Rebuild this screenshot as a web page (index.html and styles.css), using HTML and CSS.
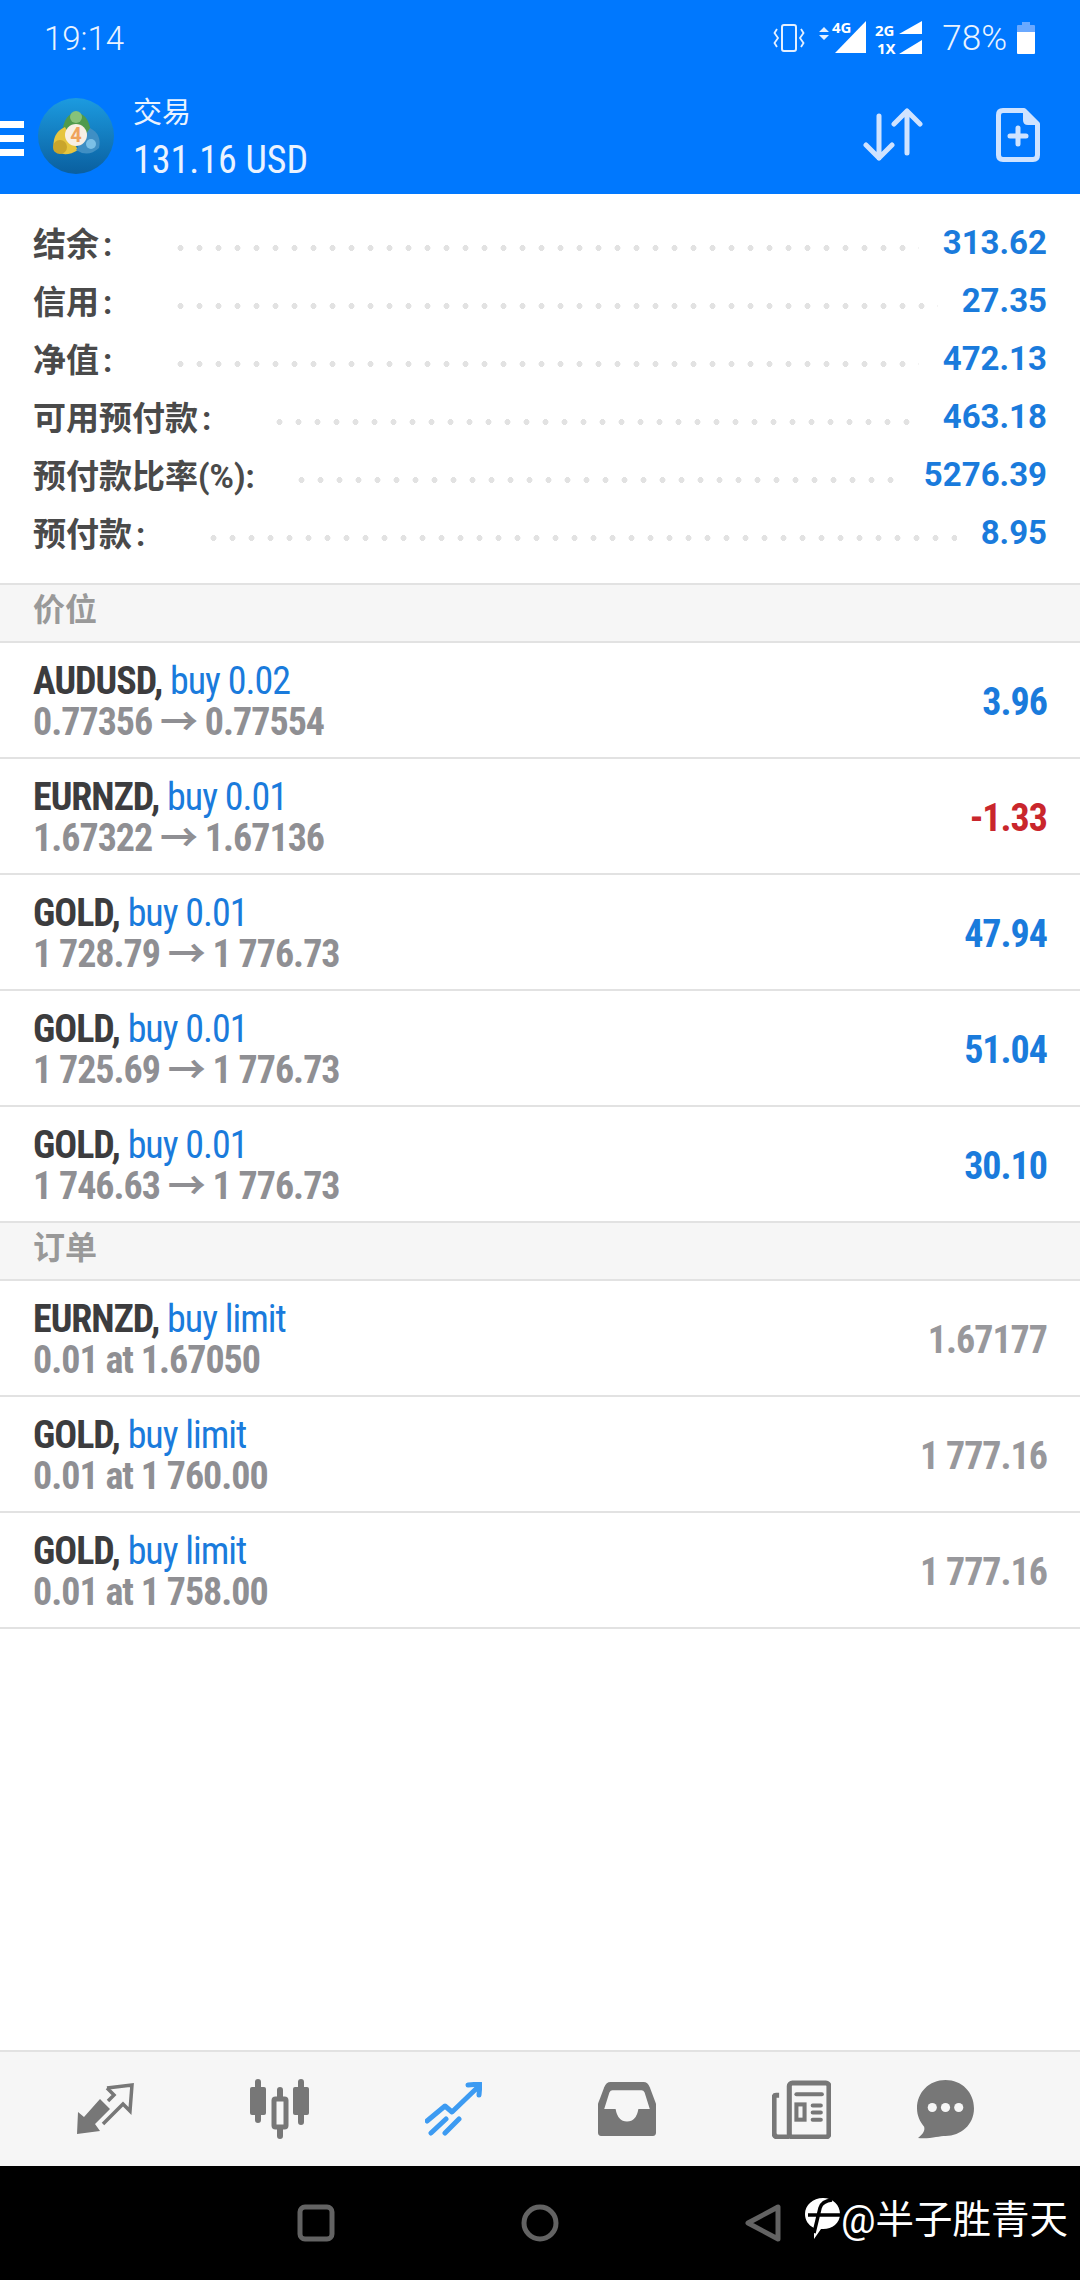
FILE: index.html
```html
<!DOCTYPE html>
<html lang="zh-CN">
<head>
    <meta charset="UTF-8">
    <meta name="viewport" content="width=device-width, initial-scale=1.0">
    <title>交易</title>
    <link rel="stylesheet" href="styles.css">
</head>
<body>
    <div class="phone">
        <header class="top">
            <div class="status-bar">
                <span class="clock">19:14</span>
                <div class="status-icons">
                    <svg class="icon-vibrate" width="32" height="30" viewBox="0 0 32 30" fill="none" stroke="#e4f0ff" stroke-width="2"><rect x="9" y="2" width="14" height="26" rx="2"/><path d="M4 6 L1.500 10 L5 15 L1.500 20 L4 24 M28 6 L30.500 10 L27 15 L30.500 20 L28 24" stroke-width="1.800"/></svg>
                    <svg class="net" width="48" height="34" viewBox="0 0 48 34"><path d="M1 11 L6 6 L11 11 Z M1 14 L11 14 L6 19 Z" fill="#e4f0ff"/><path d="M48 0 V32 H17 Z" fill="#fff"/><text x="14" y="12" class="net-label">4G</text></svg>
                    <svg class="net" width="48" height="34" viewBox="0 0 48 34"><path d="M47 0 V13 H24 Z M47 19 V33 H24 Z" fill="#fff"/><text x="0" y="15" class="net-label">2G</text><text x="2" y="33" class="net-label">1X</text></svg>
                    <span class="battery-text">78%</span>
                    <svg width="18" height="32" viewBox="0 0 18 32"><path d="M5 0 H13 V3 H17 Q18 3 18 4 V10 H0 V4 Q0 3 1 3 H5 Z" fill="#6aa9ff"/><path d="M0 10 H18 V31 Q18 32 17 32 H1 Q0 32 0 31 Z" fill="#fff"/></svg>
                </div>
            </div>
            <div class="toolbar">
                <div class="burger"><span></span><span></span><span></span></div>
                <svg class="logo" width="76" height="76" viewBox="0 0 76 76">
                    <defs>
                        <linearGradient id="logoBg" x1="0" y1="0" x2="0" y2="1"><stop offset="0" stop-color="#1c9be0"/><stop offset="1" stop-color="#0a5f9f"/></linearGradient>
                    </defs>
                    <circle cx="38" cy="38" r="38" fill="url(#logoBg)"/>
                    <path d="M24 36 Q26 15 38 15 Q51 15 53 36 L38 44 Z" fill="#4f9a4c"/>
                    <circle cx="38" cy="19" r="6" fill="#86c27a"/>
                    <path d="M16 53 Q13 35 27 29 L40 52 Q28 60 16 53 Z" fill="#e6c53f"/>
                    <circle cx="22" cy="49" r="7" fill="#c9a52c"/>
                    <path d="M61 50 Q64 36 52 30 L38 52 Q50 60 61 50 Z" fill="#3f8fc4"/>
                    <circle cx="53" cy="46" r="5" fill="#7cc0e6"/>
                    <circle cx="38" cy="37" r="11" fill="#f8efe4"/>
                    <text x="38" y="44" class="logo-num">4</text>
                </svg>
                <div class="account">
                    <span class="account-title">交易</span>
                    <span class="account-value">131.16 USD</span>
                </div>
                <svg class="action-sort" width="60" height="54" viewBox="0 0 60 54" fill="none" stroke="#cfe3ff" stroke-width="5" stroke-linecap="round" stroke-linejoin="round"><path d="M16 8 V50 M3 37 L16 50 L29 37"/><path d="M44 45 V3 M31 16 L44 3 L57 16"/></svg>
                <svg class="action-new" width="44" height="54" viewBox="0 0 44 54" fill="none"><path d="M7 2.500 H28 L41.500 16 V47 Q41.500 51.500 37 51.500 H7 Q2.500 51.500 2.500 47 V7 Q2.500 2.500 7 2.500 Z" stroke="#cfe3ff" stroke-width="5" stroke-linejoin="round"/><path d="M27 1 L43 17 H32 Q27 17 27 12 Z" fill="#cfe3ff"/><path d="M22 20 V36 M14 28 H30" stroke="#cfe3ff" stroke-width="5" stroke-linecap="round"/></svg>
            </div>
        </header>

        <section class="summary">
            <div class="summary-row"><span class="summary-label">结余<span class="colon">:</span></span><span class="dots"></span><span class="summary-value">313.62</span></div>
            <div class="summary-row"><span class="summary-label">信用<span class="colon">:</span></span><span class="dots"></span><span class="summary-value">27.35</span></div>
            <div class="summary-row"><span class="summary-label">净值<span class="colon">:</span></span><span class="dots"></span><span class="summary-value">472.13</span></div>
            <div class="summary-row"><span class="summary-label">可用预付款<span class="colon">:</span></span><span class="dots"></span><span class="summary-value">463.18</span></div>
            <div class="summary-row"><span class="summary-label">预付款比率(%):</span><span class="dots dots-tight"></span><span class="summary-value">5276.39</span></div>
            <div class="summary-row"><span class="summary-label">预付款<span class="colon">:</span></span><span class="dots"></span><span class="summary-value">8.95</span></div>
        </section>

        <div class="section-head">价位</div>
        <div class="trade">
            <div class="trade-info"><div class="line-one"><b>AUDUSD,</b> <span class="side">buy 0.02</span></div><div class="line-two">0.77356 → 0.77554</div></div>
            <span class="profit">3.96</span>
        </div>
        <div class="trade">
            <div class="trade-info"><div class="line-one"><b>EURNZD,</b> <span class="side">buy 0.01</span></div><div class="line-two">1.67322 → 1.67136</div></div>
            <span class="profit loss">-1.33</span>
        </div>
        <div class="trade">
            <div class="trade-info"><div class="line-one"><b>GOLD,</b> <span class="side">buy 0.01</span></div><div class="line-two">1 728.79 → 1 776.73</div></div>
            <span class="profit">47.94</span>
        </div>
        <div class="trade">
            <div class="trade-info"><div class="line-one"><b>GOLD,</b> <span class="side">buy 0.01</span></div><div class="line-two">1 725.69 → 1 776.73</div></div>
            <span class="profit">51.04</span>
        </div>
        <div class="trade">
            <div class="trade-info"><div class="line-one"><b>GOLD,</b> <span class="side">buy 0.01</span></div><div class="line-two">1 746.63 → 1 776.73</div></div>
            <span class="profit">30.10</span>
        </div>

        <div class="section-head">订单</div>
        <div class="trade">
            <div class="trade-info"><div class="line-one"><b>EURNZD,</b> <span class="side">buy limit</span></div><div class="line-two">0.01 at 1.67050</div></div>
            <span class="profit pending">1.67177</span>
        </div>
        <div class="trade">
            <div class="trade-info"><div class="line-one"><b>GOLD,</b> <span class="side">buy limit</span></div><div class="line-two">0.01 at 1 760.00</div></div>
            <span class="profit pending">1 777.16</span>
        </div>
        <div class="trade">
            <div class="trade-info"><div class="line-one"><b>GOLD,</b> <span class="side">buy limit</span></div><div class="line-two">0.01 at 1 758.00</div></div>
            <span class="profit pending">1 777.16</span>
        </div>

        <div class="spacer"></div>

        <nav class="tabs">
            <svg width="57" height="52" viewBox="0 0 57 52"><path d="M0 51 L1 29 L7 34 L23 16 L33 26 L18 41 L23 48 Z" fill="#777"/><path d="M30 5 L55 2 L53 28 L46 21 L26 41 M30 5 L37 12 L31 18" fill="none" stroke="#777" stroke-width="3.500"/></svg>
            <svg width="59" height="60" viewBox="0 0 59 60"><path d="M8 3 V41 M51 3 V43 M30 11 V57" stroke="#777" stroke-width="6" stroke-linecap="round"/><rect x="0" y="8" width="16" height="28" rx="2" fill="#777"/><rect x="43" y="8" width="16" height="28" rx="2" fill="#777"/><rect x="24" y="20" width="12" height="28" rx="1.500" fill="#f6f6f6" stroke="#777" stroke-width="5"/></svg>
            <svg width="57" height="54" viewBox="0 0 57 54" fill="none" stroke="#3d9bf2" stroke-width="5" stroke-linecap="round" stroke-linejoin="round"><path d="M2 39 L20 24 L27 30 L53 5 M43 3 L55 2 L54 13"/><path d="M6 51 L21 37 M20 51 L34 37"/></svg>
            <svg width="58" height="54" viewBox="0 0 56 52"><path d="M12 0 H44 Q48 0 50 5 L56 21 V49 Q56 52 53 52 H3 Q0 52 0 49 V21 L6 5 Q8 0 12 0 Z" fill="#777"/><path d="M14 8 H42 Q44 8 45 10 L50 26 H39 Q37 38 28 38 Q19 38 17 26 H6 L11 10 Q12 8 14 8 Z" fill="#f6f6f6"/></svg>
            <svg width="59" height="59" viewBox="0 0 58 58" fill="none" stroke="#777"><rect x="17" y="3" width="39" height="53" rx="3" stroke-width="5"/><path d="M7 15 H4 Q2 15 2 18 V52 Q2 56 6 56 H17" stroke-width="5"/><path d="M24 14 H49" stroke-width="4" stroke-linecap="round"/><rect x="24" y="24" width="8" height="15" stroke-width="4"/><path d="M40 25 H48 M40 32 H48 M40 39 H48" stroke-width="4" stroke-linecap="round"/></svg>
            <svg width="57" height="59" viewBox="0 0 56 58"><path d="M28 0 C44 0 56 12 56 28 C56 44 43 55 28 55 C22 55 13 58 1 57 C6 53 8 50 7 46 C3 41 0 35 0 28 C0 12 12 0 28 0 Z" fill="#777"/><circle cx="15" cy="27" r="4.500" fill="#f6f6f6"/><circle cx="28" cy="27" r="4.500" fill="#f6f6f6"/><circle cx="41" cy="27" r="4.500" fill="#f6f6f6"/></svg>
        </nav>

        <footer class="nav-bar">
            <svg class="nav-square" width="38" height="38" viewBox="0 0 38 38" fill="none" stroke="#636363" stroke-width="5"><rect x="3" y="3" width="32" height="32" rx="5"/></svg>
            <svg class="nav-circle" width="38" height="38" viewBox="0 0 38 38" fill="none" stroke="#636363" stroke-width="5"><circle cx="19" cy="19" r="16"/></svg>
            <svg class="nav-back" width="36" height="38" viewBox="0 0 36 38" fill="none" stroke="#636363" stroke-width="5" stroke-linejoin="round"><path d="M33 3 V35 L3 19 Z"/></svg>
            <div class="mark">
                <svg width="36" height="42" viewBox="0 0 36 42"><path d="M18 0 C28 0 35 7 35 16 C35 26 26 32 16 31 L9 41 L9 30 C3 27 0 22 0 16 C0 7 8 0 18 0 Z" fill="#fff"/><path d="M9 35 L15 10 Q17 3 27 2 M3 17 H36" fill="none" stroke="#000" stroke-width="3.500"/></svg>
                <span>@半子胜青天</span>
            </div>
        </footer>
    </div>
</body>
</html>
```

FILE: styles.css
```css
* {
    box-sizing: border-box;
}

body {
    margin: 0;
    font-family: Roboto, "Noto Sans CJK SC", sans-serif;
    background: #fff;
    color: #444;
}

.phone {
    width: 1080px;
    height: 2280px;
    display: flex;
    flex-direction: column;
    overflow: hidden;
}

.top {
    height: 194px;
    flex: none;
    background: #0078fe;
    color: #fff;
}

.status-bar {
    height: 76px;
    padding: 0 45px 0 44px;
    display: flex;
    justify-content: space-between;
    align-items: center;
}

.clock {
    font-size: 33px;
    font-weight: 300;
    color: #eaf3ff;
}

.status-icons {
    display: flex;
    align-items: center;
}

.icon-vibrate {
    margin-right: 13px;
}

.net {
    margin-right: 9px;
    overflow: visible;
}

.net-label {
    font-family: "Noto Sans", sans-serif;
    font-size: 15px;
    font-weight: 700;
    fill: #fff;
}

.battery-text {
    font-size: 35px;
    font-weight: 300;
    margin: 0 10px;
    color: #eaf3ff;
}

.toolbar {
    height: 118px;
    display: flex;
    align-items: center;
}

.burger {
    width: 24px;
    display: flex;
    flex-direction: column;
    gap: 7px;
    margin-top: 7px;
}

.burger span {
    height: 7px;
    background: #fff;
}

.logo {
    margin: 2px 0 0 14px;
    flex: none;
}

.logo-num {
    font-size: 20px;
    font-weight: 700;
    fill: #efa35c;
    text-anchor: middle;
}

.account {
    display: flex;
    flex-direction: column;
    margin-left: 19px;
    margin-top: 6px;
    flex: 1;
}

.account-title {
    font-size: 29px;
    line-height: 44px;
    color: #eaf3ff;
}

.account-value {
    font-size: 38px;
    line-height: 50px;
    font-stretch: 75%;
    color: #eaf3ff;
}

.action-sort {
    margin-right: 73px;
}

.action-new {
    margin-right: 40px;
}

.summary {
    height: 389px;
    flex: none;
    padding: 19px 33px 0;
}

.summary-row {
    height: 58px;
    display: flex;
    align-items: center;
}

.summary-label {
    font-size: 33px;
    font-weight: 700;
    color: #4a4a4a;
}

.colon {
    margin-left: 4px;
}

.dots {
    flex: 1;
    height: 6px;
    margin: 12px 24px 0 59px;
    background: radial-gradient(circle, #e2e2e2 2.800px, transparent 3.200px) 0 0 / 19px 6px repeat-x;
}

.dots-tight {
    margin-left: 37px;
}

.summary-value {
    font-size: 33px;
    font-weight: 700;
    color: #1a7bdc;
}

.section-head {
    height: 60px;
    flex: none;
    padding: 0 33px 12px;
    display: flex;
    align-items: center;
    background: #f6f6f6;
    border-top: 2px solid #e2e2e2;
    border-bottom: 2px solid #e2e2e2;
    font-size: 32px;
    font-weight: 700;
    color: #999;
}

.trade {
    height: 116px;
    flex: none;
    padding: 4px 33px 0;
    display: flex;
    align-items: center;
    justify-content: space-between;
    border-bottom: 2px solid #e2e2e2;
}

.trade + .section-head {
    border-top: 0;
    height: 58px;
}

.line-one,
.line-two {
    font-size: 38px;
    line-height: 41px;
    font-stretch: 75%;
    letter-spacing: -1px;
}

.line-one b {
    color: #3c3c3e;
}

.side {
    color: #1a7bdc;
}

.line-two {
    font-weight: 700;
    color: #8f8f93;
}

.profit {
    font-size: 38px;
    font-weight: 700;
    font-stretch: 75%;
    letter-spacing: -1px;
    color: #1a7bdc;
}

.loss {
    color: #c9262c;
}

.pending {
    color: #98989c;
}

.spacer {
    flex: 1;
}

.tabs {
    height: 116px;
    flex: none;
    background: #f6f6f6;
    border-top: 2px solid #e2e2e2;
    display: flex;
    align-items: center;
    gap: 116px;
    padding-left: 77px;
}

.tabs svg:last-child {
    margin-left: -30px;
}

.nav-bar {
    height: 114px;
    flex: none;
    background: #000;
    position: relative;
}

.nav-bar svg {
    position: absolute;
}

.nav-square {
    left: 297px;
    top: 38px;
}

.nav-circle {
    left: 521px;
    top: 38px;
}

.nav-back {
    left: 745px;
    top: 38px;
}

.mark {
    position: absolute;
    left: 805px;
    top: 22px;
    display: flex;
    align-items: center;
    color: #fff;
    font-size: 38.500px;
}

.mark svg {
    position: static;
    margin-top: 6px;
}
```
